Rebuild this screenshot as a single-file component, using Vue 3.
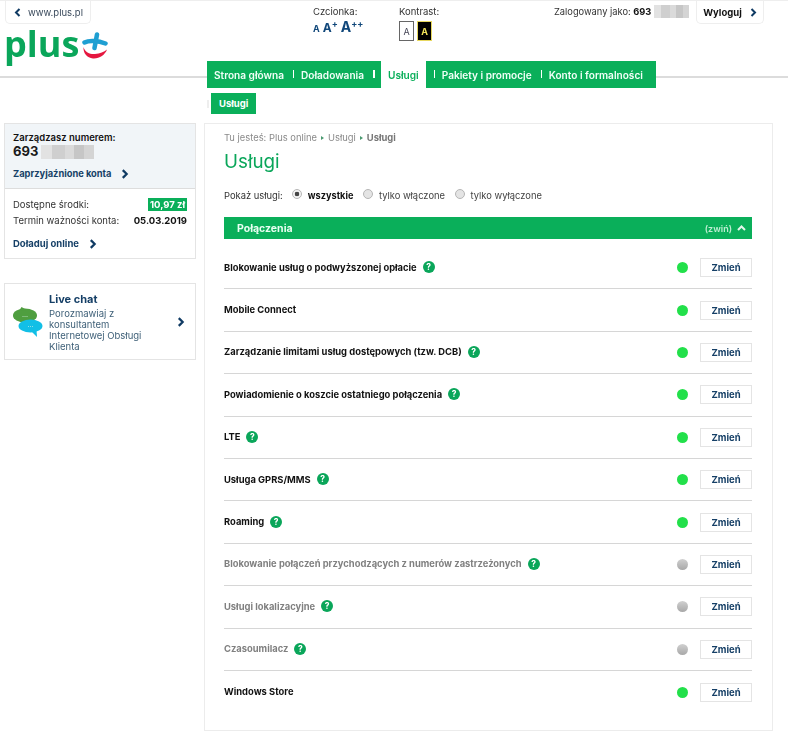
<script setup>
const fontSizes = [
  { label: 'A', cls: 'a1', sup: '' },
  { label: 'A', cls: 'a2', sup: '+' },
  { label: 'A', cls: 'a3', sup: '++' },
]

const menu = [
  { label: 'Strona główna' },
  { label: 'Doładowania' },
  { label: 'Usługi', active: true },
  { label: 'Pakiety i promocje' },
  { label: 'Konto i formalności' },
]

const services = [
  { name: 'Blokowanie usług o podwyższonej opłacie', on: true, help: true },
  { name: 'Mobile Connect', on: true, help: false },
  { name: 'Zarządzanie limitami usług dostępowych (tzw. DCB)', on: true, help: true },
  { name: 'Powiadomienie o koszcie ostatniego połączenia', on: true, help: true },
  { name: 'LTE', on: true, help: true },
  { name: 'Usługa GPRS/MMS', on: true, help: true },
  { name: 'Roaming', on: true, help: true },
  { name: 'Blokowanie połączeń przychodzących z numerów zastrzeżonych', on: false, help: true },
  { name: 'Usługi lokalizacyjne', on: false, help: true },
  { name: 'Czasoumilacz', on: false, help: true },
  { name: 'Windows Store', on: true, help: false },
]

const filters = [
  { label: 'wszystkie', checked: true },
  { label: 'tylko włączone', checked: false },
  { label: 'tylko wyłączone', checked: false },
]
</script>

<template>
  <div class="page">
    <header class="top">
      <div class="top-left">
        <a class="tab back">
          <svg width="7" height="9" viewBox="0 0 7 9"><path d="M5.500 1 2 4.500 5.500 8" class="chev" /></svg>
          <span>www.plus.pl</span>
        </a>
        <div class="logo">
          <span class="logo-text">plus</span>
          <svg width="26" height="28" viewBox="0 0 26 28">
            <path d="M2.500 10.500C7 8 16 8.500 23.500 11.500" class="cross" />
            <path d="M15 2.500 12.500 16" class="cross" />
            <path d="M1.500 15C3 21 9 22.500 13 22c5-.5 9-2 12-4.500C23 23 17 27 11 26.500 5 26 1 21 1.500 15z" fill="#e5173f" />
          </svg>
        </div>
      </div>
      <div class="tool font-tool">
        <div class="tool-label">Czcionka:</div>
        <div class="sizes">
          <span v-for="s in fontSizes" :key="s.cls" :class="s.cls">{{ s.label }}<sup v-if="s.sup">{{ s.sup }}</sup></span>
        </div>
      </div>
      <div class="tool contrast-tool">
        <div class="tool-label">Kontrast:</div>
        <div class="contrast">
          <span class="box light">A</span>
          <span class="box dark">A</span>
        </div>
      </div>
      <div class="login">
        <span>Zalogowany jako: <b>693</b></span>
        <i class="blur login-blur"></i>
      </div>
      <a class="tab logout">
        <span>Wyloguj</span>
        <svg width="7" height="9" viewBox="0 0 7 9"><path d="M1.500 1 5 4.500 1.500 8" class="chev" /></svg>
      </a>
    </header>

    <nav class="menu">
      <a v-for="(m, i) in menu" :key="m.label" class="menu-item" :class="{ active: m.active, sep: i > 0 }">{{ m.label }}</a>
    </nav>
    <div class="submenu">
      <span class="sub-tick"></span>
      <a class="sub-item">Usługi</a>
    </div>

    <div class="main">
      <aside class="side">
        <section class="card account">
          <div class="account-top">
            <div class="dark-label">Zarządzasz numerem:</div>
            <div class="number">693 <i class="blur number-blur"></i></div>
            <a class="link friends">Zaprzyjaźnione konta
              <svg width="8" height="10" viewBox="0 0 7 9"><path d="M1.500 1 5 4.500 1.500 8" class="chev" /></svg>
            </a>
          </div>
          <div class="account-bottom">
            <div class="line"><span>Dostępne środki:</span><b class="money">10,97 zł</b></div>
            <div class="line"><span>Termin ważności konta:</span><b>05.03.2019</b></div>
            <a class="link topup">Doładuj online
              <svg width="8" height="10" viewBox="0 0 7 9"><path d="M1.500 1 5 4.500 1.500 8" class="chev" /></svg>
            </a>
          </div>
        </section>

        <section class="card chat">
          <svg class="chat-icon" width="32" height="32" viewBox="0 0 32 32">
            <ellipse cx="12" cy="9.500" rx="12" ry="7" fill="#4f9e3f" />
            <path d="M6 5 8.500 1 14 4z" fill="#4f9e3f" />
            <ellipse cx="17.500" cy="20" rx="12" ry="6.500" fill="#12bfe6" />
            <path d="M18 25l6 6-.5-7z" fill="#12bfe6" />
            <text x="12" y="11" class="dots">...</text>
            <text x="17.500" y="21" class="dots">...</text>
          </svg>
          <div class="chat-text">
            <div class="chat-title">Live chat</div>
            <div class="chat-desc">Porozmawiaj z konsultantem Internetowej Obsługi Klienta</div>
          </div>
          <svg class="chat-arrow" width="8" height="10" viewBox="0 0 7 9"><path d="M1.500 1 5 4.500 1.500 8" class="chev" /></svg>
        </section>
      </aside>

      <main class="content">
        <div class="crumbs">
          <span>Tu jesteś: Plus online</span><i class="tri"></i><span>Usługi</span><i class="tri"></i><b>Usługi</b>
        </div>
        <h1>Usługi</h1>
        <div class="filters">
          <span class="filters-label">Pokaż usługi:</span>
          <label v-for="f in filters" :key="f.label" class="filter" :class="{ checked: f.checked }">
            <span class="radio"></span>{{ f.label }}
          </label>
        </div>

        <div class="bar">
          <span class="bar-title">Połączenia</span>
          <span class="bar-toggle">(zwiń)
            <svg width="9" height="6" viewBox="0 0 9 6"><path d="M1 5 4.500 1.500 8 5" class="chev white" /></svg>
          </span>
        </div>

        <div class="list">
          <div v-for="s in services" :key="s.name" class="row" :class="{ off: !s.on }">
            <span class="name">{{ s.name }}</span>
            <span v-if="s.help" class="help">?</span>
            <span class="dot"></span>
            <a class="change">Zmień</a>
          </div>
        </div>
      </main>
    </div>
  </div>
</template>

<style>
html, body {
  background: #fff;
}
</style>

<style scoped>
.page {
  width: 788px;
  height: 739px;
  overflow: hidden;
  font-family: Inter, "Open Sans", sans-serif;
  font-size: 9.500px;
  color: #333;
  filter: blur(0.25px);
}
.top {
  display: flex;
  height: 78px;
  box-sizing: border-box;
  border-top: 1px solid #eee;
  border-bottom: 2px solid #dcdcdc;
}
.top-left {
  width: 313px;
  flex: none;
  padding-left: 5px;
  box-sizing: border-box;
}
.tab {
  display: inline-flex;
  align-items: center;
  box-sizing: border-box;
  height: 23px;
  border: 1px solid #eee;
  border-top: 0;
  border-radius: 0 0 5px 5px;
}
.back {
  width: 86px;
  padding-left: 8px;
  gap: 7px;
  color: #3a4a5c;
  font-size: 9.500px;
}
.chev {
  fill: none;
  stroke: #0f3a63;
  stroke-width: 2;
}
.chev.white {
  stroke: #e4f6ec;
}
.logo {
  display: flex;
  align-items: flex-start;
  margin: 2px 0 0 -1px;
  gap: 3px;
}
.logo-text {
  font-family: "Open Sans", sans-serif;
  font-weight: 700;
  font-size: 36px;
  line-height: 36px;
  color: #0aa65a;
}
.logo svg {
  margin-top: 6px;
}
.cross {
  fill: none;
  stroke: #1f9fd2;
  stroke-width: 4.500;
  stroke-linecap: round;
}
.tool-label {
  font-size: 9.500px;
  margin-top: 5px;
}
.font-tool {
  width: 86px;
  flex: none;
}
.sizes {
  display: flex;
  align-items: baseline;
  gap: 3px;
  color: #10477a;
  font-weight: 700;
  line-height: 14px;
  margin-top: 3px;
}
.sizes sup {
  font-size: 9px;
  line-height: 0;
  vertical-align: 5px;
}
.a1 { font-size: 9px; }
.a2 { font-size: 12px; }
.a3 { font-size: 14px; }
.contrast-tool {
  width: 155px;
  flex: none;
}
.contrast {
  display: flex;
  gap: 3px;
  margin-top: 4px;
}
.box {
  display: flex;
  align-items: center;
  justify-content: center;
  box-sizing: border-box;
  width: 15px;
  height: 20px;
  font-size: 9px;
}
.box.light {
  border: 1px solid #666;
  color: #445;
}
.box.dark {
  background: #000;
  border: 1px solid #e8d860;
  color: #f1e35a;
  font-weight: 700;
}
.login {
  display: flex;
  align-items: flex-start;
  width: 142px;
  flex: none;
  padding-top: 5px;
  font-size: 9.300px;
  white-space: nowrap;
}
.login b {
  color: #111;
}
.blur {
  display: inline-block;
  background:
    linear-gradient(90deg, #e2e2e2 0 20%, #cfcfcf 20% 45%, #dadada 45% 62%, #c6c6c6 62% 82%, #d4d4d4 82%);
}
.login-blur {
  width: 35px;
  height: 13px;
  margin: -1px 0 0 3px;
}
.logout {
  width: 68px;
  height: 23px;
  justify-content: center;
  gap: 8px;
  color: #111;
  font-weight: 700;
  font-size: 9.500px;
}
.menu {
  display: flex;
  width: 449px;
  height: 27px;
  margin: -17px 0 0 207px;
  background: #0aaf5a;
  position: relative;
}
.menu-item {
  display: flex;
  align-items: center;
  height: 27px;
  padding: 0 9px 0 8px;
  color: #f2fff8;
  font-size: 10.100px;
  font-weight: 600;
  white-space: nowrap;
  position: relative;
}
.menu-item:first-child {
  padding-left: 7px;
}
.menu-item.sep::before {
  content: "";
  position: absolute;
  left: 0;
  top: 9px;
  width: 1.500px;
  height: 8px;
  background: #fff;
}
.menu-item.active {
  background: #fff;
  color: #0aaf5a;
  padding: 0 7px;
  margin-left: 8px;
}
.menu-item.active::before {
  left: -8px;
}
.menu-item.active + .menu-item {
  margin-left: 8px;
}
.submenu {
  display: flex;
  align-items: center;
  height: 21px;
  margin: 5px 0 0 207px;
}
.sub-tick {
  width: 2px;
  height: 8px;
  background: #eee;
  margin-right: 2px;
}
.sub-item {
  display: flex;
  align-items: center;
  height: 21px;
  padding: 0 8px;
  background: #0aaf5a;
  color: #fff;
  font-weight: 700;
  font-size: 9.500px;
}
.main {
  display: flex;
  gap: 8px;
  margin: 9px 0 0 4px;
}
.side {
  width: 192px;
  flex: none;
}
.card {
  box-sizing: border-box;
  border: 1px solid #e4e4e4;
}
.account {
  height: 136px;
}
.account-top {
  height: 65px;
  box-sizing: border-box;
  padding: 8px 8px 0;
  background: #f1f5f8;
  border-bottom: 1px solid #ddd;
}
.dark-label {
  color: #111;
  font-weight: 600;
}
.number {
  display: flex;
  align-items: center;
  gap: 3px;
  font-size: 13px;
  font-weight: 700;
  color: #1a1a1a;
  line-height: 15px;
  margin-top: 1px;
}
.number-blur {
  width: 53px;
  height: 14px;
}
.link {
  display: flex;
  align-items: center;
  gap: 10px;
  color: #153f66;
  font-weight: 700;
  margin-top: 9px;
}
.friends {
  font-size: 9.300px;
}
.account-bottom {
  padding: 8px 8px 0;
}
.line {
  display: flex;
  justify-content: space-between;
  align-items: center;
  height: 15px;
  margin-bottom: 1px;
}
.line b {
  color: #111;
}
.money {
  background: #0aaf5a;
  padding: 1px 2px;
  color: #fff !important;
  font-size: 9.500px;
}
.topup {
  margin-top: 10px;
}
.chat {
  display: flex;
  align-items: center;
  height: 77px;
  margin-top: 24px;
  padding: 0 10px 0 8px;
  position: relative;
}
.chat-icon {
  flex: none;
  margin-right: 4px;
}
.dots {
  fill: #d8f2e8;
  font-size: 7px;
  text-anchor: middle;
}
.chat-text {
  flex: 1;
  min-width: 0;
}
.chat-title {
  font-size: 11px;
  font-weight: 700;
  color: #153f66;
  line-height: 14px;
}
.chat-desc {
  width: 105px;
  color: #3f6078;
  line-height: 11px;
  margin-top: 2px;
}
.chat-arrow {
  flex: none;
}
.content {
  width: 569px;
  height: 608px;
  box-sizing: border-box;
  padding: 8px 20px 0 19px;
  border: 1px solid #ececec;
}
.crumbs {
  display: flex;
  align-items: center;
  gap: 4px;
  font-size: 9.400px;
  color: #8a8a8a;
  line-height: 12px;
}
.crumbs b {
  color: #777;
}
.tri {
  width: 0;
  height: 0;
  border-left: 3px solid #4a9a70;
  border-top: 2.500px solid transparent;
  border-bottom: 2.500px solid transparent;
}
h1 {
  margin: 7px 0 0;
  font-size: 18.800px;
  font-weight: 400;
  color: #0aa65a;
  line-height: 22px;
}
.filters {
  display: flex;
  align-items: center;
  height: 14px;
  margin-top: 15px;
  font-size: 9.400px;
}
.filters-label {
  margin-right: 9px;
}
.filter {
  display: flex;
  align-items: center;
  gap: 6px;
  margin-right: 9.500px;
  color: #444;
}
.filter.checked {
  color: #111;
  font-weight: 700;
  font-size: 9.200px;
}
.radio {
  box-sizing: border-box;
  width: 10px;
  height: 10px;
  margin-top: -2px;
  border-radius: 50%;
  border: 1px solid #b5b5b5;
  background: #e4e4e4;
}
.checked .radio {
  background: radial-gradient(circle, #444 0 2px, #f2f2f2 2.600px);
}
.bar {
  display: flex;
  justify-content: space-between;
  align-items: center;
  height: 22px;
  margin-top: 15px;
  padding: 0 6px 0 13px;
  background: #0aaf5a;
  color: #e8fff2;
}
.bar-title {
  font-size: 10.500px;
  font-weight: 700;
}
.bar-toggle {
  display: flex;
  align-items: center;
  gap: 5px;
  font-size: 9px;
  font-weight: 600;
  color: #bdeed2;
}
.list {
  margin-top: 8px;
}
.row {
  display: flex;
  align-items: center;
  box-sizing: border-box;
  height: 42.400px;
  border-bottom: 1.500px solid #d6d6d6;
  color: #111;
}
.row:last-child {
  border-bottom: 0;
}
.name {
  font-weight: 700;
  font-size: 9.400px;
  margin-top: -1px;
}
.row.off .name {
  color: #808080;
}
.help {
  display: flex;
  align-items: center;
  justify-content: center;
  width: 12px;
  height: 12px;
  margin: -1px 0 0 6px;
  border-radius: 50%;
  background: #0aa65a;
  color: #fff;
  font-size: 8.500px;
  font-weight: 700;
}
.dot {
  width: 11px;
  height: 11px;
  margin-left: auto;
  border-radius: 50%;
  background: #22e04a;
}
.row.off .dot {
  background: linear-gradient(#d0d0d0, #a8a8a8);
}
.change {
  display: flex;
  align-items: center;
  justify-content: center;
  box-sizing: border-box;
  width: 52px;
  height: 19px;
  margin-left: 12px;
  border: 1px solid #e4e4e4;
  background: #fff;
  color: #153f66;
  font-weight: 700;
  font-size: 9.500px;
}
</style>
